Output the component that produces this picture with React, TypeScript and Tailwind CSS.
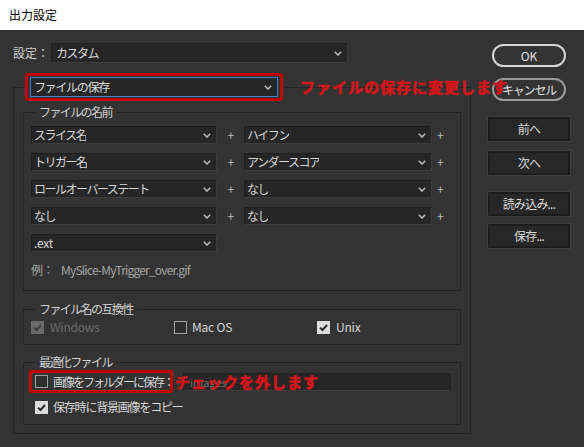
import * as React from 'react'

function Chevron() {
  return (
    <svg width="8" height="5" viewBox="0 0 8 5" className="shrink-0">
      <polyline points="0.8,0.8 4,4 7.2,0.8" fill="none" stroke="#bcbcbc" strokeWidth="1.5" />
    </svg>
  )
}

function Select({ value, className, latin }: { value: string; className?: string; latin?: boolean }) {
  return (
    <div
      className={`flex items-center justify-between h-[18px] pl-[2px] pr-[5px] bg-[#262626] border border-[#1f1f1f] border-b-[#3c3c3c] border-r-[#3c3c3c] text-[#d6d6d6] ${className ?? ''}`}
    >
      <span className={`truncate ${latin ? 'tracking-[-0.2px]' : 'tracking-[-1.5px]'}`}>{value}</span>
      <Chevron />
    </div>
  )
}

function Check({ checked, disabled }: { checked?: boolean; disabled?: boolean }) {
  if (!checked) {
    return <span className="w-[13px] h-[13px] shrink-0 border border-[#a0a0a0] bg-[#2e2e2e]" />
  }
  return (
    <span
      className={`w-[13px] h-[13px] shrink-0 flex items-center justify-center ${disabled ? 'bg-[#6a6a6a]' : 'bg-[#dcdcdc]'}`}
    >
      <svg width="11" height="11" viewBox="0 0 11 11">
        <polyline
          points="2,5.6 4.5,8 9,3"
          fill="none"
          stroke={disabled ? '#3c3c3c' : '#2c2c2c'}
          strokeWidth="2"
        />
      </svg>
    </span>
  )
}

function NameRow({ left, right }: { left: string; right: string }) {
  return (
    <div className="flex items-center">
      <Select value={left} className="w-[186px]" />
      <span className="w-[27px] text-center text-[#bdbdbd]">+</span>
      <Select value={right} className="w-[188px]" />
      <span className="w-[16px] text-center text-[#bdbdbd]">+</span>
    </div>
  )
}

function SideButton({ label, className }: { label: string; className?: string }) {
  return (
    <div
      className={`w-[82px] h-[24px] flex items-center justify-center bg-[#272727] border-2 border-[#1c1c1c] shadow-[0_0_0_1px_#3d3d3d] text-[#dadada] ${className ?? ''}`}
    >
      {label}
    </div>
  )
}

export default function App() {
  return (
    <div className="w-[584px] h-[447px] overflow-hidden flex flex-col text-[12px] leading-4 tracking-[-0.8px] font-['Noto_Sans_CJK_JP','Noto_Sans',sans-serif]">
      <div className="h-[30px] shrink-0 bg-white pl-[9px] flex items-center text-black tracking-normal">
        出力設定
      </div>

      <div className="flex-1 flex bg-[#333333]">
        {/* left side */}
        <div className="w-[470px] pl-[13px] pt-[13px]">
          <div className="flex items-center h-[20px]">
            <span className="w-[38px] text-[#cfcfcf] tracking-normal">設定：</span>
            <div className="w-[297px] h-[20px] flex items-center justify-between pl-[4px] pr-[5px] bg-[#262626] border border-[#1f1f1f] border-b-[#3c3c3c] border-r-[#3c3c3c] text-[#d6d6d6]">
              <span className="tracking-[-1.5px]">カスタム</span>
              <Chevron />
            </div>
          </div>

          <fieldset className="mt-[10px] w-[457px] border border-[#242424]">
            <legend className="ml-[11px]">
              <div className="relative">
                <div className="w-[258px] px-[2px] py-[1px] border-[3px] border-[#c00000] rounded-[3px]">
                  <div className="h-[20px] flex items-center justify-between pl-[3px] pr-[5px] bg-[#262626] border border-[#3f7fd0] text-[#dcdcdc]">
                    <span className="tracking-[-1.3px]">ファイルの保存</span>
                    <Chevron />
                  </div>
                </div>
                <span className="absolute left-[275px] top-1/2 -translate-y-1/2 whitespace-nowrap text-[15px] font-bold tracking-[1px] text-[#d3161b] [-webkit-text-stroke:0.7px_#d3161b]">
                  ファイルの保存に変更します
                </span>
              </div>
            </legend>

            <div className="px-[9px] pb-[8px]">
              <fieldset className="mt-[3px] border border-[#242424]">
                <legend className="ml-[11px] px-[4px] text-[#d2d2d2] tracking-[-1.6px]">ファイルの名前</legend>
                <div className="pl-[7px] pt-[6px] pb-[12px] flex flex-col gap-[9px]">
                  <NameRow left="スライス名" right="ハイフン" />
                  <NameRow left="トリガー名" right="アンダースコア" />
                  <NameRow left="ロールオーバーステート" right="なし" />
                  <NameRow left="なし" right="なし" />
                  <Select value=".ext" className="w-[186px]" latin />
                  <div className="mt-[1px] flex text-[#a4a4a4]">
                    <span className="w-[30px]">例：</span>
                    <span>MySlice-MyTrigger_over.gif</span>
                  </div>
                </div>
              </fieldset>

              <fieldset className="mt-[10px] border border-[#242424]">
                <legend className="ml-[11px] px-[4px] text-[#d2d2d2] tracking-[-1.6px]">ファイル名の互換性</legend>
                <div className="pl-[7px] pt-[2px] pb-[9px] flex tracking-[-0.2px]">
                  <div className="w-[143px] flex items-center gap-[6px] text-[#6c6c6c]">
                    <Check checked disabled />
                    <span>Windows</span>
                  </div>
                  <div className="w-[143px] flex items-center gap-[5px] text-[#d6d6d6]">
                    <Check />
                    <span>Mac OS</span>
                  </div>
                  <div className="w-[143px] flex items-center gap-[6px] text-[#d6d6d6]">
                    <Check checked />
                    <span>Unix</span>
                  </div>
                </div>
              </fieldset>

              <fieldset className="mt-[9px] border border-[#242424]">
                <legend className="ml-[11px] px-[4px] text-[#d2d2d2] tracking-[-1.6px]">最適化ファイル</legend>
                <div className="pl-[5px] pr-[9px] pb-[9px]">
                  <div className="flex items-center">
                    <div className="relative w-[144px] h-[23px] px-[3px] flex items-center gap-[5px] border-[3px] border-[#c00000] rounded-[2px] text-[#d6d6d6]">
                      <Check />
                      <span className="whitespace-nowrap tracking-[-2px]">画像をフォルダーに保存：</span>
                      <span className="absolute left-full ml-[5px] top-1/2 -translate-y-1/2 whitespace-nowrap text-[15px] font-bold tracking-[1px] text-[#d3161b] z-10 [-webkit-text-stroke:0.7px_#d3161b]">
                        チェックを外します
                      </span>
                    </div>
                    <div className="ml-[10px] flex-1 h-[18px] flex items-center pl-[6px] bg-[#262626] border border-[#1f1f1f] border-b-[#3c3c3c] text-[11px] text-[#6e6e6e] tracking-normal">
                      images
                    </div>
                  </div>
                  <div className="mt-[6px] pl-[6px] flex items-center gap-[5px] text-[#d6d6d6]">
                    <Check checked />
                    <span className="tracking-[-1.2px]">保存時に背景画像をコピー</span>
                  </div>
                </div>
              </fieldset>
            </div>
          </fieldset>
        </div>

        {/* right side */}
        <div className="ml-[18px] w-[82px] pt-[14px] flex flex-col items-center">
          <div className="w-[74px] h-[23px] rounded-full border-2 border-[#d6d6d6] flex items-center justify-center text-[#e2e2e2] tracking-normal">
            OK
          </div>
          <div className="mt-[11px] w-[74px] h-[23px] rounded-full border-2 border-[#9a9a9a] flex items-center justify-center text-[#e2e2e2] tracking-[-1.2px]">
            キャンセル
          </div>
          <SideButton label="前へ" className="mt-[16px]" />
          <SideButton label="次へ" className="mt-[10px]" />
          <SideButton label="読み込み..." className="mt-[17px]" />
          <SideButton label="保存..." className="mt-[8px]" />
        </div>
      </div>
    </div>
  )
}
